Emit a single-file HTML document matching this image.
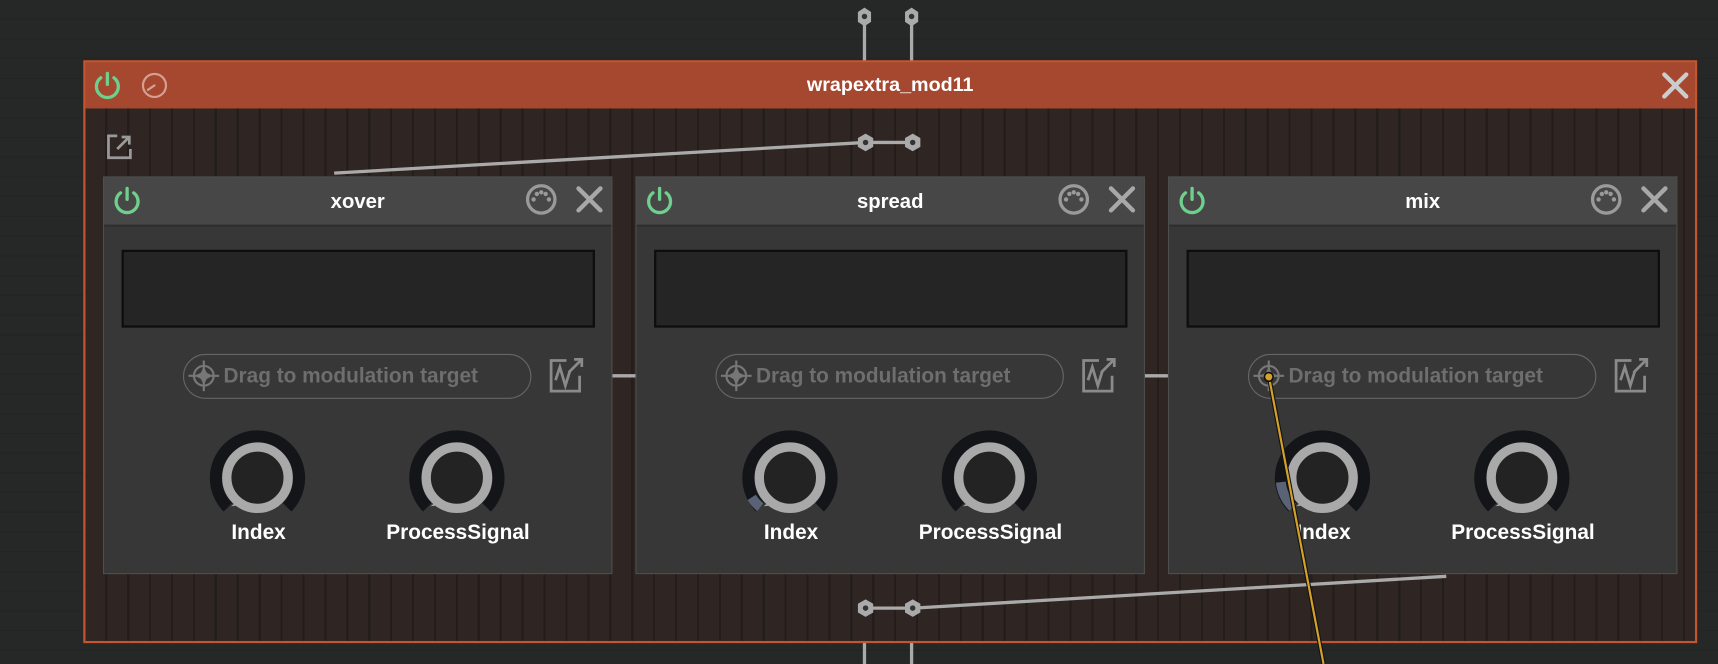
<!DOCTYPE html>
<html><head><meta charset="utf-8"><style>
html,body{margin:0;padding:0;width:1718px;height:664px;overflow:hidden;background:#262828}
#w{position:absolute;left:0;top:0;width:1568px;height:606px;transform:scale(1.09566);transform-origin:0 0;font-family:"Liberation Sans",sans-serif;
background:repeating-linear-gradient(180deg,#262828 0,#262828 17px,#232525 17px,#232525 18px)}
.abs{position:absolute}
#frame{left:76px;top:55px;width:1469px;height:528px;border:2px solid #c5552f;
background:repeating-linear-gradient(90deg,#2f2522 0,#2f2522 18px,#231d1c 18px,#231d1c 20px)}
#hdr{left:0;top:0;right:0;height:42px;background:#a5482f}
#title{left:0;right:0;top:10px;text-align:center;color:#fff;font-weight:bold;font-size:18px}
.mod{position:absolute;top:161px;width:463px;height:361px;background:#373737;border:1.5px solid #4e4e4e}
.mh{position:absolute;left:0;right:0;top:0;height:43px;background:#474747;border-bottom:2px solid #2e2e2e}
.mt{position:absolute;left:0;right:0;top:11px;text-align:center;color:#fff;font-weight:bold;font-size:18.5px}
.disp{position:absolute;left:16px;top:66px;width:428px;height:67px;background:#252525;border:2px solid #0d0d0d}
.pill{position:absolute;left:72px;top:161px;width:316px;height:39px;border:1.5px solid #666;border-radius:21px}
.pt{position:absolute;left:36px;top:9px;color:#6e6e6e;font-weight:bold;font-size:19px;white-space:nowrap}
.lbl{position:absolute;top:314px;color:#fff;font-weight:bold;font-size:19px;text-align:center;width:200px}
</style></head><body><div id="w">
<svg class="abs" style="left:0;top:0" width="1568" height="606">
<g stroke="#aaa" stroke-width="3"><line x1="789" y1="15" x2="789" y2="56"/><line x1="832" y1="15" x2="832" y2="56"/>
<line x1="789" y1="586" x2="789" y2="606"/><line x1="832" y1="586" x2="832" y2="606"/></g>
<g fill="#aaa"><polygon points="783,11 789,7 795,11 795,20 789,24 783,20"/><polygon points="826,11 832,7 838,11 838,20 832,24 826,20"/></g>
<g fill="#333"><circle cx="789" cy="15" r="2.5"/><circle cx="832" cy="15" r="2.5"/></g>
</svg>
<div id="frame" class="abs">
<div id="hdr" class="abs"><div id="title" class="abs">wrapextra_mod11</div>
<svg class="abs" style="left:7px;top:8px" width="80" height="26"><g fill="none" stroke-linecap="round">
<path d="M7 6 A10 10 0 1 0 19 6" stroke="#6fcf8c" stroke-width="3"/><line x1="13" y1="2" x2="13" y2="12" stroke="#6fcf8c" stroke-width="3"/>
<circle cx="56" cy="13" r="10.5" stroke="#d5a091" stroke-width="2"/><line x1="56" y1="13" x2="50" y2="17" stroke="#d5a091" stroke-width="2"/></g></svg>
<svg class="abs" style="left:1438px;top:8px" width="26" height="26"><g stroke="#ccc" stroke-width="4" stroke-linecap="round"><line x1="3" y1="3" x2="23" y2="23"/><line x1="23" y1="3" x2="3" y2="23"/></g></svg>
</div>
<svg class="abs" style="left:19px;top:65px" width="26" height="26"><g fill="none" stroke="#9a9a9a" stroke-width="2.5"><path d="M10 2 H2 V22 H22 V14"/><path d="M10 14 L21 3 M14 3 H21 V10"/></g></svg>
</div>
<svg class="abs" style="left:0;top:0" width="1568" height="606">
<line x1="305" y1="158" x2="790" y2="130" stroke="#aaa" stroke-width="3"/>
<line x1="790" y1="130" x2="833" y2="130" stroke="#aaa" stroke-width="3"/>
<g stroke="#aaa" stroke-width="3"><line x1="559" y1="343" x2="580" y2="343"/><line x1="1045" y1="343" x2="1066" y2="343"/></g>
</svg>

<div class="mod" style="left:94px"><div class="mh"><div class="mt">xover</div></div><div class="disp"></div><div class="pill"><div class="pt">Drag to modulation target</div></div><div class="lbl" style="left:41px">Index</div><div class="lbl" style="left:223px">ProcessSignal</div></div>
<div class="mod" style="left:580px"><div class="mh"><div class="mt">spread</div></div><div class="disp"></div><div class="pill"><div class="pt">Drag to modulation target</div></div><div class="lbl" style="left:41px">Index</div><div class="lbl" style="left:223px">ProcessSignal</div></div>
<div class="mod" style="left:1066px"><div class="mh"><div class="mt">mix</div></div><div class="disp"></div><div class="pill"><div class="pt">Drag to modulation target</div></div><div class="lbl" style="left:41px">Index</div><div class="lbl" style="left:223px">ProcessSignal</div></div>

<svg class="abs" style="left:0;top:0" width="1568" height="606">
<defs>
<g id="hicons">
<path d="M7 6 A10 10 0 1 0 19 6" fill="none" stroke="#6fcf8c" stroke-width="3" stroke-linecap="round"/><line x1="13" y1="2" x2="13" y2="12" stroke="#6fcf8c" stroke-width="3" stroke-linecap="round"/>
<circle cx="391" cy="12" r="12.5" fill="none" stroke="#9a9a9a" stroke-width="3"/>
<g fill="#9a9a9a"><circle cx="384" cy="12" r="2"/><circle cx="387" cy="7" r="2"/><circle cx="391" cy="5.5" r="2"/><circle cx="395" cy="7" r="2"/><circle cx="398" cy="12" r="2"/></g>
<g stroke="#a8a8a8" stroke-width="4" stroke-linecap="round"><line x1="425" y1="2" x2="445" y2="22"/><line x1="445" y1="2" x2="425" y2="22"/></g>
</g>
<g id="modicon" fill="none" stroke="#8a8a8a" stroke-width="2.5"><path d="M16 2 H2 V30 H28 V16"/><path d="M6 20 L10 8 L15 25 L19 12"/><path d="M18 13 L30 1 M23 1 H30 V8"/></g>
<g id="target" fill="none" stroke="#777" stroke-width="2"><circle cx="0" cy="0" r="9"/><path d="M-14 0 H14 M0 -14 V14"/><path d="M0 -6 L2 -2 6 0 2 2 0 6 -2 2 -6 0 -2 -2Z" fill="#777"/></g>
<g id="knob">
<path d="M-27 27 A38 38 0 1 1 27 27" fill="none" stroke="#141519" stroke-width="11"/>
<circle r="28" fill="#232323"/>
<circle r="28" fill="none" stroke="#a9a9a9" stroke-width="8.5"/>
<path d="M-19 22 L-24 26 L-15 25Z" fill="#a9a9a9"/>
</g>
</defs>
<use href="#hicons" transform="translate(103,170)"/>
<use href="#hicons" transform="translate(589,170)"/>
<use href="#hicons" transform="translate(1075,170)"/>
<use href="#modicon" transform="translate(501,327)"/>
<use href="#modicon" transform="translate(987,327)"/>
<use href="#modicon" transform="translate(1473,327)"/>
<use href="#target" transform="translate(186,343)"/>
<use href="#target" transform="translate(672,343)"/>
<use href="#target" transform="translate(1158,343)"/>
<use href="#knob" transform="translate(235,436)"/>
<use href="#knob" transform="translate(417,436)"/>
<use href="#knob" transform="translate(721,436)"/>
<use href="#knob" transform="translate(903,436)"/>
<use href="#knob" transform="translate(1207,436)"/>
<use href="#knob" transform="translate(1389,436)"/>
<path d="M694 463 A38 38 0 0 1 686 454" fill="none" stroke="#5a6275" stroke-width="9"/>
<path d="M1180 463 A38 38 0 0 1 1169 440" fill="none" stroke="#5a6275" stroke-width="9"/>
<line x1="1320" y1="526" x2="834" y2="555" stroke="#aaa" stroke-width="3"/>
<line x1="790" y1="555" x2="834" y2="555" stroke="#aaa" stroke-width="3"/>
<g fill="#aaa"><polygon points="783,551 790,547 797,551 797,559 790,563 783,559"/><polygon points="826,551 833,547 840,551 840,559 833,563 826,559"/>
<polygon points="783,126 790,122 797,126 797,134 790,138 783,134"/><polygon points="826,126 833,122 840,126 840,134 833,138 826,134"/></g>
<g fill="#333"><circle cx="790" cy="555" r="2.5"/><circle cx="833" cy="555" r="2.5"/><circle cx="790" cy="130" r="2.5"/><circle cx="833" cy="130" r="2.5"/></g>
<line x1="1158" y1="343" x2="1208" y2="606" stroke="#111" stroke-width="4"/>
<line x1="1158" y1="343" x2="1208" y2="606" stroke="#d4a12a" stroke-width="2"/>
<circle cx="1158" cy="344" r="4" fill="#d4a12a" stroke="#111" stroke-width="1.5"/>
</svg>
</div></body></html>
